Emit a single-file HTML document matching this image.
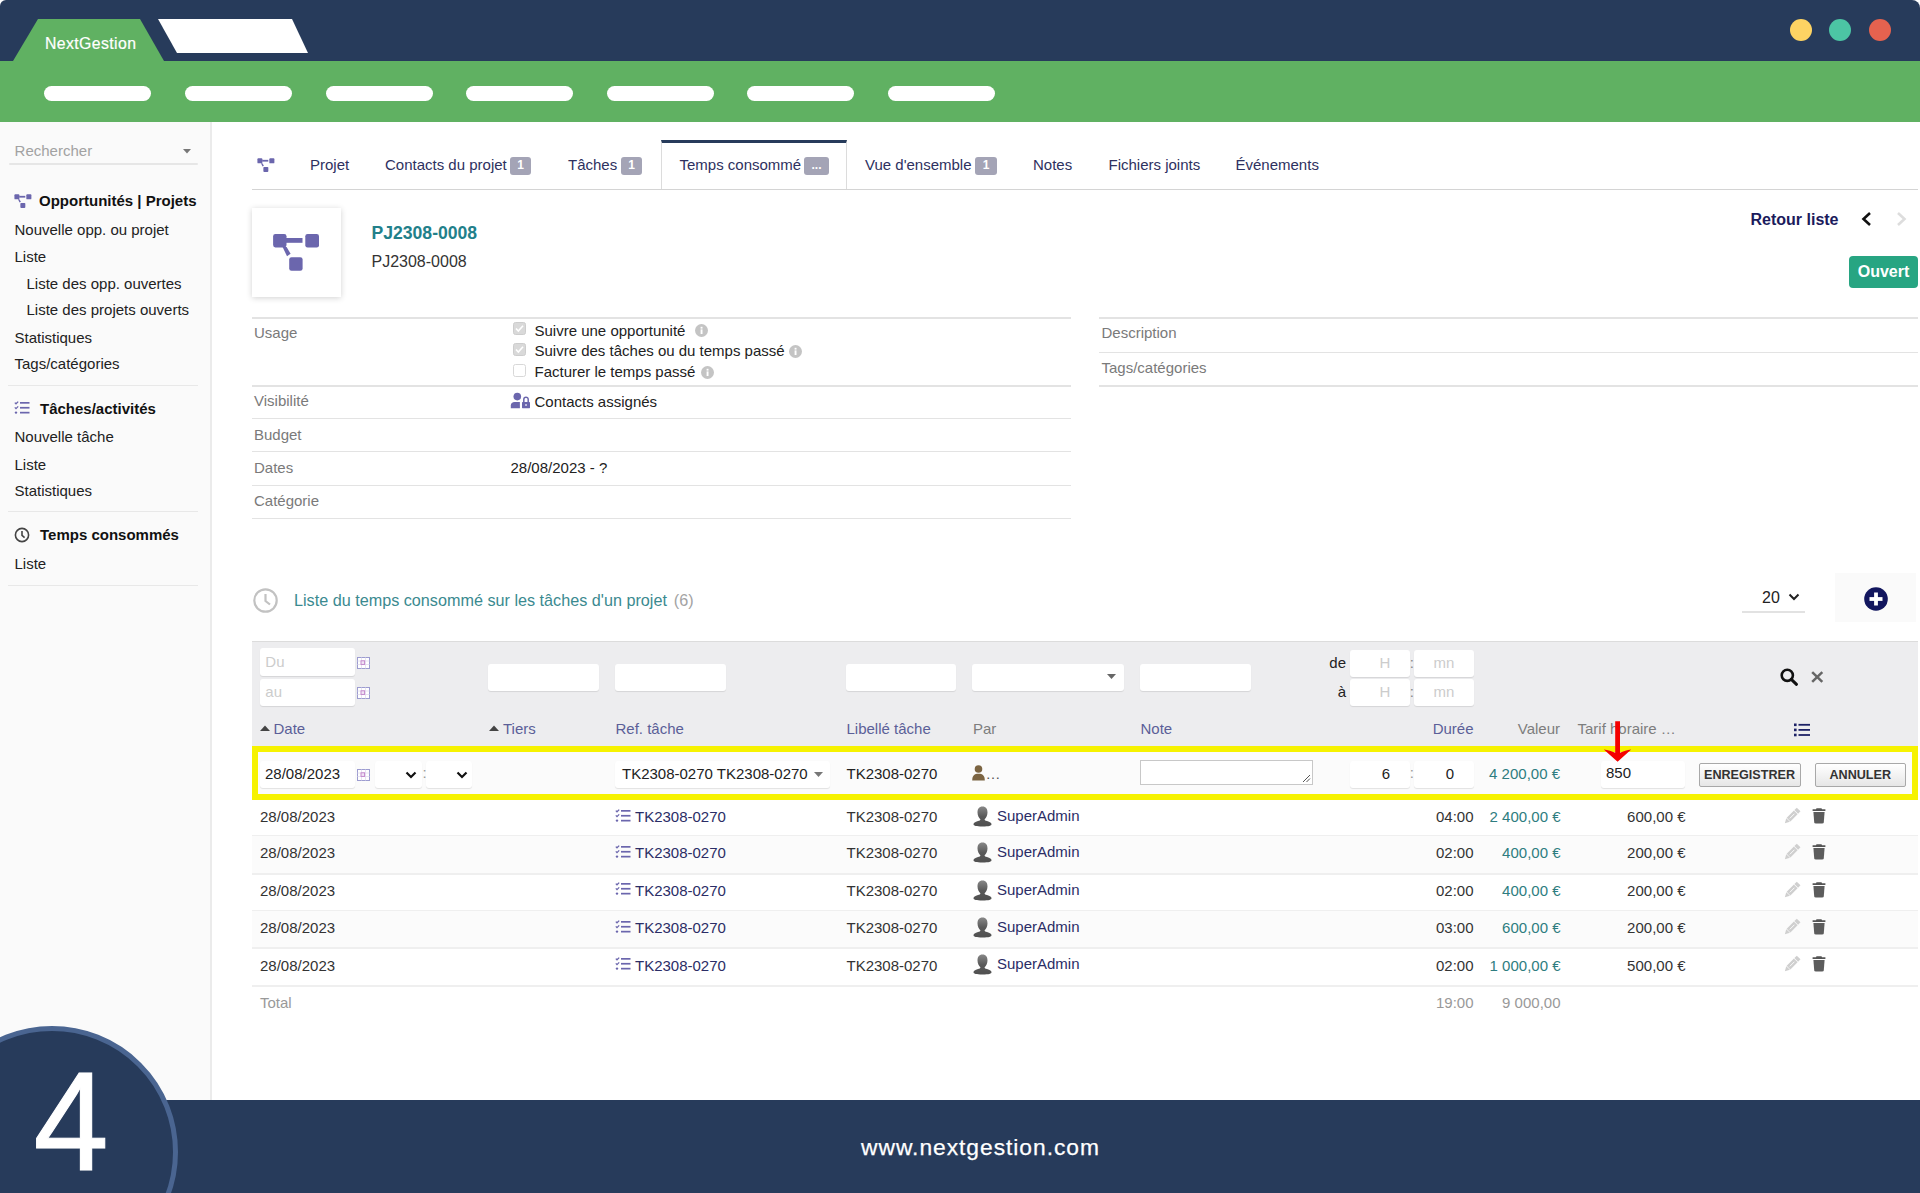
<!DOCTYPE html>
<html><head><meta charset="utf-8"><style>
html,body{margin:0;padding:0;width:1920px;height:1193px;overflow:hidden;background:#fff;font-family:"Liberation Sans",sans-serif;}
.a{position:absolute;}
.t{position:absolute;white-space:nowrap;}
svg.a{overflow:visible;}
.badge{background:#a4a4b6;border-radius:3px;color:#fff;font-size:12px;font-weight:700;line-height:17px;text-align:center;}
.inp{background:#fff;border-radius:3px;box-shadow:0 1px 1px rgba(0,0,0,0.10);box-sizing:border-box;white-space:nowrap;overflow:hidden;}
.btn{box-sizing:border-box;border:1px solid #a8a8a8;border-radius:2px;background:linear-gradient(#ffffff,#e6e6e6);color:#333;font-weight:700;font-size:12.6px;line-height:22.5px;text-align:center;}
</style></head><body>
<div class="a" style="left:0px;top:0px;width:1920px;height:62px;background:#273b5b;border-radius:6px 8px 0 0;"></div>
<svg class="a" style="left:0px;top:0px" width="320" height="62" viewBox="0 0 320 62"><polygon points="13,61 38,19 140,19 164,61" fill="#60b162"/><polygon points="158,19 292,19 308,53 177,53" fill="#fff"/></svg>
<div class="t " style="left:45px;top:36.33px;font-size:15.8px;line-height:15.8px;color:#fff;letter-spacing:0.4px;-webkit-text-stroke:0.2px #fff;">NextGestion</div>
<div class="a" style="left:0px;top:61px;width:1920px;height:61px;background:#60b162;"></div>
<div class="a" style="left:44px;top:86px;width:107px;height:15px;background:#fff;border-radius:8px;"></div>
<div class="a" style="left:185px;top:86px;width:107px;height:15px;background:#fff;border-radius:8px;"></div>
<div class="a" style="left:326px;top:86px;width:107px;height:15px;background:#fff;border-radius:8px;"></div>
<div class="a" style="left:466px;top:86px;width:107px;height:15px;background:#fff;border-radius:8px;"></div>
<div class="a" style="left:607px;top:86px;width:107px;height:15px;background:#fff;border-radius:8px;"></div>
<div class="a" style="left:747px;top:86px;width:107px;height:15px;background:#fff;border-radius:8px;"></div>
<div class="a" style="left:888px;top:86px;width:107px;height:15px;background:#fff;border-radius:8px;"></div>
<div class="a" style="left:1790px;top:19px;width:22px;height:22px;background:#fdd363;border-radius:50%;"></div>
<div class="a" style="left:1829px;top:19px;width:22px;height:22px;background:#4cc5a4;border-radius:50%;"></div>
<div class="a" style="left:1869px;top:19px;width:22px;height:22px;background:#e5624f;border-radius:50%;"></div>
<div class="a" style="left:0px;top:122px;width:210px;height:978px;background:#fafafa;"></div>
<div class="a" style="left:210px;top:122px;width:2px;height:978px;background:#ebebeb;"></div>
<div class="t " style="left:14.6px;top:142.80px;font-size:15px;line-height:15px;color:#a2a2a2;">Rechercher</div>
<div class="a" style="left:9px;top:163px;width:189px;height:2px;background:#e6e6e6;border-radius:1px;"></div>
<svg class="a" style="left:183px;top:149.2px" width="8" height="5" viewBox="0 0 8 5"><polygon points="0,0 8,0 4,4.6" fill="#777"/></svg>
<svg class="a" style="left:13.6px;top:193.6px" width="19" height="15" viewBox="0 0 19 15"><g fill="#6b66ad" transform="scale(0.37)"><rect x="1.1" y="1" width="13.4" height="13.4" rx="2.3"/><rect x="33.3" y="1" width="13.7" height="13.5" rx="2.3"/><rect x="17.2" y="24.2" width="13.4" height="13.5" rx="2.3"/><rect x="14" y="5" width="16.5" height="4.8"/><polygon points="10.6,14 14.6,14 18.6,20.8 15,23.2"/></g></svg>
<div class="t " style="left:39px;top:193.30px;font-size:15px;line-height:15px;color:#111;font-weight:700;">Opportunités | Projets</div>
<div class="t " style="left:14.5px;top:221.70px;font-size:15px;line-height:15px;color:#222;">Nouvelle opp. ou projet</div>
<div class="t " style="left:14.5px;top:248.80px;font-size:15px;line-height:15px;color:#222;">Liste</div>
<div class="t " style="left:26.5px;top:276.00px;font-size:15px;line-height:15px;color:#222;">Liste des opp. ouvertes</div>
<div class="t " style="left:26.5px;top:302.30px;font-size:15px;line-height:15px;color:#222;">Liste des projets ouverts</div>
<div class="t " style="left:14.5px;top:329.50px;font-size:15px;line-height:15px;color:#222;">Statistiques</div>
<div class="t " style="left:14.5px;top:356.30px;font-size:15px;line-height:15px;color:#222;">Tags/catégories</div>
<div class="a" style="left:8px;top:385px;width:190px;height:1px;background:#e8e8e8;"></div>
<svg class="a" style="left:14px;top:401px" width="16" height="13" viewBox="0 0 16 13"><g fill="none" stroke="#6b66ad" stroke-width="1.3"><polyline points="0.8,1.6 2,2.8 4.2,0.6"/><polyline points="0.8,6.4 2,7.6 4.2,5.4"/></g><circle cx="2" cy="11.6" r="1.2" fill="#6b66ad"/><g fill="#6b66ad"><rect x="6" y="1" width="9.5" height="1.7"/><rect x="6" y="5.9" width="9.5" height="1.7"/><rect x="6" y="10.8" width="9.5" height="1.7"/></g></svg>
<div class="t " style="left:40px;top:400.60px;font-size:15px;line-height:15px;color:#111;font-weight:700;">Tâches/activités</div>
<div class="t " style="left:14.5px;top:429.10px;font-size:15px;line-height:15px;color:#222;">Nouvelle tâche</div>
<div class="t " style="left:14.5px;top:456.50px;font-size:15px;line-height:15px;color:#222;">Liste</div>
<div class="t " style="left:14.5px;top:483.30px;font-size:15px;line-height:15px;color:#222;">Statistiques</div>
<div class="a" style="left:8px;top:511px;width:190px;height:1px;background:#e8e8e8;"></div>
<svg class="a" style="left:14px;top:527px" width="16" height="16" viewBox="0 0 16 16"><circle cx="8" cy="8" r="6.6" fill="none" stroke="#444" stroke-width="1.6"/><polyline points="8,4 8,8.3 10.6,10.6" fill="none" stroke="#444" stroke-width="1.6"/></svg>
<div class="t " style="left:40px;top:527.00px;font-size:15px;line-height:15px;color:#111;font-weight:700;">Temps consommés</div>
<div class="t " style="left:14.5px;top:556.30px;font-size:15px;line-height:15px;color:#222;">Liste</div>
<div class="a" style="left:8px;top:585px;width:190px;height:1px;background:#e8e8e8;"></div>
<svg class="a" style="left:257.3px;top:157.6px" width="19" height="15" viewBox="0 0 19 15"><g fill="#6b66ad" transform="scale(0.37)"><rect x="1.1" y="1" width="13.4" height="13.4" rx="2.3"/><rect x="33.3" y="1" width="13.7" height="13.5" rx="2.3"/><rect x="17.2" y="24.2" width="13.4" height="13.5" rx="2.3"/><rect x="14" y="5" width="16.5" height="4.8"/><polygon points="10.6,14 14.6,14 18.6,20.8 15,23.2"/></g></svg>
<div class="a" style="left:252px;top:189px;width:1666px;height:1px;background:#d4d4d4;"></div>
<div class="a" style="left:661px;top:140px;width:186px;height:49px;background:#fff;border:1px solid #dcdcdc;border-top:3px solid #273b5b;border-bottom:none;box-sizing:border-box;"></div>
<div class="t " style="left:310px;top:157.30px;font-size:15px;line-height:15px;color:#2e3160;">Projet</div>
<div class="t " style="left:385px;top:157.30px;font-size:15px;line-height:15px;color:#2e3160;">Contacts du projet</div>
<div class="a badge" style="left:510px;top:157.4px;width:21px;height:17.6px;">1</div>
<div class="t " style="left:568px;top:157.30px;font-size:15px;line-height:15px;color:#2e3160;">Tâches</div>
<div class="a badge" style="left:621px;top:157.4px;width:21px;height:17.6px;">1</div>
<div class="t " style="left:679.5px;top:157.30px;font-size:15px;line-height:15px;color:#2e3160;">Temps consommé</div>
<div class="a badge" style="left:804px;top:157.4px;width:25px;height:17.6px;">...</div>
<div class="t " style="left:865px;top:157.30px;font-size:15px;line-height:15px;color:#2e3160;">Vue d'ensemble</div>
<div class="a badge" style="left:975px;top:157.4px;width:22px;height:17.6px;">1</div>
<div class="t " style="left:1033px;top:157.30px;font-size:15px;line-height:15px;color:#2e3160;">Notes</div>
<div class="t " style="left:1108.5px;top:157.30px;font-size:15px;line-height:15px;color:#2e3160;">Fichiers joints</div>
<div class="t " style="left:1235.5px;top:157.30px;font-size:15px;line-height:15px;color:#2e3160;">Événements</div>
<div class="a" style="left:252px;top:208px;width:89px;height:89px;background:#fff;box-shadow:0 1px 6px rgba(0,0,0,0.18);"></div>
<svg class="a" style="left:272.3px;top:233px" width="49" height="39" viewBox="0 0 49 39"><g fill="#6b66ad" transform="scale(1.0)"><rect x="1.1" y="1" width="13.4" height="13.4" rx="2.3"/><rect x="33.3" y="1" width="13.7" height="13.5" rx="2.3"/><rect x="17.2" y="24.2" width="13.4" height="13.5" rx="2.3"/><rect x="14" y="5" width="16.5" height="4.8"/><polygon points="10.6,14 14.6,14 18.6,20.8 15,23.2"/></g></svg>
<div class="t " style="left:371.5px;top:225.30px;font-size:17.6px;line-height:17.6px;color:#22808a;font-weight:700;">PJ2308-0008</div>
<div class="t " style="left:371.5px;top:253.96px;font-size:16px;line-height:16px;color:#333;">PJ2308-0008</div>
<div class="t " style="right:81.5px;top:211.86px;font-size:16px;line-height:16px;color:#1b1b5c;font-weight:700;">Retour liste</div>
<svg class="a" style="left:1860px;top:211px" width="14" height="16" viewBox="0 0 14 16"><polyline points="10,2 3.5,8 10,14" fill="none" stroke="#111" stroke-width="2.6"/></svg>
<svg class="a" style="left:1894px;top:211px" width="14" height="16" viewBox="0 0 14 16"><polyline points="4,2 10.5,8 4,14" fill="none" stroke="#ddd" stroke-width="2.6"/></svg>
<div class="a" style="left:1849px;top:255.5px;width:69px;height:32px;background:#27a582;border-radius:4px;color:#fff;font-weight:700;font-size:16px;line-height:32px;text-align:center;">Ouvert</div>
<div class="a" style="left:252px;top:317px;width:819px;height:2px;background:#e3e3e3;"></div>
<div class="a" style="left:252px;top:384.5px;width:819px;height:2px;background:#e3e3e3;"></div>
<div class="a" style="left:252px;top:418px;width:819px;height:1px;background:#e3e3e3;"></div>
<div class="a" style="left:252px;top:451px;width:819px;height:1px;background:#e3e3e3;"></div>
<div class="a" style="left:252px;top:485px;width:819px;height:1px;background:#e3e3e3;"></div>
<div class="a" style="left:252px;top:517.5px;width:819px;height:1px;background:#e3e3e3;"></div>
<div class="a" style="left:1099px;top:317px;width:819px;height:2px;background:#e3e3e3;"></div>
<div class="a" style="left:1099px;top:351.5px;width:819px;height:1px;background:#e3e3e3;"></div>
<div class="a" style="left:1099px;top:384.5px;width:819px;height:2px;background:#e3e3e3;"></div>
<div class="t " style="left:254px;top:324.80px;font-size:15px;line-height:15px;color:#7a7a7a;">Usage</div>
<div class="t " style="left:254px;top:393.30px;font-size:15px;line-height:15px;color:#7a7a7a;">Visibilité</div>
<div class="t " style="left:254px;top:427.30px;font-size:15px;line-height:15px;color:#7a7a7a;">Budget</div>
<div class="t " style="left:254px;top:460.30px;font-size:15px;line-height:15px;color:#7a7a7a;">Dates</div>
<div class="t " style="left:254px;top:493.30px;font-size:15px;line-height:15px;color:#7a7a7a;">Catégorie</div>
<div class="t " style="left:1101.5px;top:324.80px;font-size:15px;line-height:15px;color:#7a7a7a;">Description</div>
<div class="t " style="left:1101.5px;top:359.90px;font-size:15px;line-height:15px;color:#7a7a7a;">Tags/catégories</div>
<svg class="a" style="left:513px;top:322px" width="13" height="13" viewBox="0 0 13 13"><rect x="0.5" y="0.5" width="12" height="12" rx="2" fill="#d9d9d9" stroke="#cdcdcd"/><polyline points="3,6.5 5.3,9 10,3.8" fill="none" stroke="#fff" stroke-width="1.6"/></svg>
<div class="t " style="left:534.5px;top:322.60px;font-size:15px;line-height:15px;color:#222;">Suivre une opportunité</div>
<svg class="a" style="left:694.5px;top:323.8px" width="13" height="13" viewBox="0 0 13 13"><circle cx="6.5" cy="6.5" r="6.5" fill="#c4c4c4"/><rect x="5.6" y="5.4" width="1.9" height="4.6" fill="#fff"/><rect x="5.6" y="2.8" width="1.9" height="1.8" fill="#fff"/></svg>
<svg class="a" style="left:513px;top:343px" width="13" height="13" viewBox="0 0 13 13"><rect x="0.5" y="0.5" width="12" height="12" rx="2" fill="#d9d9d9" stroke="#cdcdcd"/><polyline points="3,6.5 5.3,9 10,3.8" fill="none" stroke="#fff" stroke-width="1.6"/></svg>
<div class="t " style="left:534.5px;top:343.10px;font-size:15px;line-height:15px;color:#222;">Suivre des tâches ou du temps passé</div>
<svg class="a" style="left:789.0px;top:344.5px" width="13" height="13" viewBox="0 0 13 13"><circle cx="6.5" cy="6.5" r="6.5" fill="#c4c4c4"/><rect x="5.6" y="5.4" width="1.9" height="4.6" fill="#fff"/><rect x="5.6" y="2.8" width="1.9" height="1.8" fill="#fff"/></svg>
<svg class="a" style="left:513px;top:364px" width="13" height="13" viewBox="0 0 13 13"><rect x="0.5" y="0.5" width="12" height="12" rx="2" fill="#fff" stroke="#d8d8d8"/></svg>
<div class="t " style="left:534.5px;top:364.00px;font-size:15px;line-height:15px;color:#222;">Facturer le temps passé</div>
<svg class="a" style="left:700.5px;top:365.5px" width="13" height="13" viewBox="0 0 13 13"><circle cx="6.5" cy="6.5" r="6.5" fill="#c4c4c4"/><rect x="5.6" y="5.4" width="1.9" height="4.6" fill="#fff"/><rect x="5.6" y="2.8" width="1.9" height="1.8" fill="#fff"/></svg>
<svg class="a" style="left:510px;top:392px" width="21" height="17" viewBox="0 0 21 17"><g fill="#6b66ad"><circle cx="7.3" cy="4.6" r="3.8"/><path d="M0.8,16.2 L0.8,13.6 C0.8,11.4 2.3,10 4.6,10 L9.9,10 L9.9,16.2 Z"/><rect x="12" y="10.1" width="8" height="6.1" rx="0.6"/><path d="M13.8,10.3 L13.8,7.4 A2.2,2.2 0 0 1 18.2,7.4 L18.2,10.3" fill="none" stroke="#6b66ad" stroke-width="1.5"/><rect x="15.3" y="12.2" width="1.4" height="1.6" fill="#fff"/></g></svg>
<div class="t " style="left:534.5px;top:393.90px;font-size:15px;line-height:15px;color:#222;">Contacts assignés</div>
<div class="t " style="left:510.5px;top:460.30px;font-size:15px;line-height:15px;color:#222;">28/08/2023 - ?</div>
<svg class="a" style="left:253px;top:588px" width="25" height="25" viewBox="0 0 25 25"><circle cx="12.5" cy="12.5" r="11.2" fill="none" stroke="#c2c2c2" stroke-width="2.2"/><polyline points="12.5,6 12.5,13 17,16.5" fill="none" stroke="#c2c2c2" stroke-width="2.2"/></svg>
<div class="t " style="left:294px;top:591.79px;font-size:16.2px;line-height:16.2px;color:#3b8a90;">Liste du temps consommé sur les tâches d'un projet</div>
<div class="t " style="left:673.8px;top:591.79px;font-size:16.2px;line-height:16.2px;color:#a3a3a3;">(6)</div>
<div class="t " style="left:1762px;top:589.76px;font-size:16px;line-height:16px;color:#222;">20</div>
<svg class="a" style="left:1788px;top:593px" width="12" height="8" viewBox="0 0 12 8"><polyline points="1.5,1.5 6,6 10.5,1.5" fill="none" stroke="#222" stroke-width="2"/></svg>
<div class="a" style="left:1742px;top:611px;width:63px;height:1.6px;background:#e2e2e2;"></div>
<div class="a" style="left:1835px;top:573px;width:81px;height:49px;background:#fafafa;"></div>
<svg class="a" style="left:1864px;top:587px" width="24" height="24" viewBox="0 0 24 24"><circle cx="12" cy="12" r="11.8" fill="#12165e"/><rect x="10.1" y="5.5" width="3.8" height="13" fill="#fff"/><rect x="5.5" y="10.1" width="13" height="3.8" fill="#fff"/></svg>
<div class="a" style="left:252px;top:641px;width:1666px;height:105px;background:#ededef;border-top:1px solid #dcdcdc;box-sizing:border-box;"></div>
<div class="a inp" style="left:260px;top:648px;width:95px;height:28px;line-height:28px;color:#ccc;text-align:left;padding:0 5.3px;font-size:15px">Du</div>
<div class="a inp" style="left:260px;top:679px;width:95px;height:27px;line-height:25px;color:#ccc;text-align:left;padding:0 5.3px;font-size:15px">au</div>
<svg class="a" style="left:357px;top:657px" width="13" height="12" viewBox="0 0 13 12"><rect x="0.5" y="0.5" width="12" height="11" fill="#fff" stroke="#9c9cd0"/><g stroke="#e2dcef" stroke-width="0.8"><line x1="0.5" y1="4" x2="12.5" y2="4"/><line x1="0.5" y1="7.5" x2="12.5" y2="7.5"/><line x1="4.5" y1="0.5" x2="4.5" y2="11.5"/><line x1="8.5" y1="0.5" x2="8.5" y2="11.5"/></g><rect x="4" y="3.8" width="3.6" height="3.6" fill="#f0e4f4" stroke="#c080c8" stroke-width="0.9"/></svg>
<svg class="a" style="left:357px;top:687px" width="13" height="12" viewBox="0 0 13 12"><rect x="0.5" y="0.5" width="12" height="11" fill="#fff" stroke="#9c9cd0"/><g stroke="#e2dcef" stroke-width="0.8"><line x1="0.5" y1="4" x2="12.5" y2="4"/><line x1="0.5" y1="7.5" x2="12.5" y2="7.5"/><line x1="4.5" y1="0.5" x2="4.5" y2="11.5"/><line x1="8.5" y1="0.5" x2="8.5" y2="11.5"/></g><rect x="4" y="3.8" width="3.6" height="3.6" fill="#f0e4f4" stroke="#c080c8" stroke-width="0.9"/></svg>
<div class="a inp" style="left:488px;top:663.5px;width:111px;height:27px;line-height:25px;color:#ccc;text-align:left;padding:0 6px;font-size:15px"></div>
<div class="a inp" style="left:615px;top:663.5px;width:111px;height:27px;line-height:25px;color:#ccc;text-align:left;padding:0 6px;font-size:15px"></div>
<div class="a inp" style="left:846px;top:663.5px;width:110px;height:27px;line-height:25px;color:#ccc;text-align:left;padding:0 6px;font-size:15px"></div>
<div class="a inp" style="left:972px;top:663.5px;width:152px;height:27px;line-height:25px;color:#ccc;text-align:left;padding:0 6px;font-size:15px"></div>
<svg class="a" style="left:1107px;top:674px" width="9" height="6" viewBox="0 0 9 6"><polygon points="0,0 9,0 4.5,5" fill="#666"/></svg>
<div class="a inp" style="left:1140px;top:663.5px;width:111px;height:27px;line-height:25px;color:#ccc;text-align:left;padding:0 6px;font-size:15px"></div>
<div class="t " style="right:574px;top:655.30px;font-size:15px;line-height:15px;color:#222;">de</div>
<div class="t " style="right:574px;top:684.30px;font-size:15px;line-height:15px;color:#222;">à</div>
<div class="a inp" style="left:1350px;top:649.5px;width:60px;height:27px;line-height:25px;color:#ccc;text-align:right;padding:0 19.6px;font-size:15px">H</div>
<div class="a inp" style="left:1414px;top:649.5px;width:60px;height:27px;line-height:25px;color:#ccc;text-align:right;padding:0 19.6px;font-size:15px">mn</div>
<div class="a inp" style="left:1350px;top:678.5px;width:60px;height:27px;line-height:25px;color:#ccc;text-align:right;padding:0 19.6px;font-size:15px">H</div>
<div class="a inp" style="left:1414px;top:678.5px;width:60px;height:27px;line-height:25px;color:#ccc;text-align:right;padding:0 19.6px;font-size:15px">mn</div>
<div class="t " style="left:1409.8px;top:655.30px;font-size:15px;line-height:15px;color:#888;">:</div>
<div class="t " style="left:1409.8px;top:684.30px;font-size:15px;line-height:15px;color:#888;">:</div>
<svg class="a" style="left:1780px;top:668px" width="19" height="18" viewBox="0 0 19 18"><circle cx="7.3" cy="7.3" r="5.6" fill="none" stroke="#111" stroke-width="2.6"/><line x1="11.3" y1="11.3" x2="16.5" y2="16.3" stroke="#111" stroke-width="3" stroke-linecap="round"/></svg>
<svg class="a" style="left:1810.5px;top:671px" width="12.5" height="12" viewBox="0 0 12.5 12"><g stroke="#666" stroke-width="2.5"><line x1="1.2" y1="1.2" x2="11.3" y2="10.8"/><line x1="11.3" y1="1.2" x2="1.2" y2="10.8"/></g></svg>
<svg class="a" style="left:260px;top:725px" width="10" height="6" viewBox="0 0 10 6"><polygon points="0,6 10,6 5,0.5" fill="#444"/></svg>
<div class="t " style="left:273.5px;top:720.60px;font-size:15px;line-height:15px;color:#5b5f98;">Date</div>
<svg class="a" style="left:488.5px;top:725px" width="10" height="6" viewBox="0 0 10 6"><polygon points="0,6 10,6 5,0.5" fill="#444"/></svg>
<div class="t " style="left:503px;top:720.60px;font-size:15px;line-height:15px;color:#5b5f98;">Tiers</div>
<div class="t " style="left:615.5px;top:720.60px;font-size:15px;line-height:15px;color:#5b5f98;">Ref. tâche</div>
<div class="t " style="left:846.5px;top:720.60px;font-size:15px;line-height:15px;color:#5b5f98;">Libellé tâche</div>
<div class="t " style="left:973px;top:720.60px;font-size:15px;line-height:15px;color:#7d7d7d;">Par</div>
<div class="t " style="left:1140.5px;top:720.60px;font-size:15px;line-height:15px;color:#5b5f98;">Note</div>
<div class="t " style="right:446.5px;top:720.60px;font-size:15px;line-height:15px;color:#5b5f98;">Durée</div>
<div class="t " style="right:360px;top:720.60px;font-size:15px;line-height:15px;color:#7d7d7d;">Valeur</div>
<div class="t " style="left:1577.5px;top:720.60px;font-size:15px;line-height:15px;color:#7d7d7d;">Tarif horaire …</div>
<svg class="a" style="left:1794px;top:723px" width="17" height="14" viewBox="0 0 17 14"><g fill="#1d2266"><rect x="0" y="0.5" width="2.6" height="2.6"/><rect x="0" y="5.6" width="2.6" height="2.6"/><rect x="0" y="10.7" width="2.6" height="2.6"/><rect x="4.5" y="0.9" width="11.5" height="1.8"/><rect x="4.5" y="6" width="11.5" height="1.8"/><rect x="4.5" y="11.1" width="11.5" height="1.8"/></g></svg>
<div class="a" style="left:252px;top:746.2px;width:1666px;height:53.6px;background:#fbfbfb;border:6px solid #f6f200;box-sizing:border-box;"></div>
<div class="a inp" style="left:260px;top:761px;width:95px;height:27px;line-height:25px;color:#222;text-align:left;padding:0 5px;font-size:15px">28/08/2023</div>
<svg class="a" style="left:357px;top:769px" width="13" height="12" viewBox="0 0 13 12"><rect x="0.5" y="0.5" width="12" height="11" fill="#fff" stroke="#9c9cd0"/><g stroke="#e2dcef" stroke-width="0.8"><line x1="0.5" y1="4" x2="12.5" y2="4"/><line x1="0.5" y1="7.5" x2="12.5" y2="7.5"/><line x1="4.5" y1="0.5" x2="4.5" y2="11.5"/><line x1="8.5" y1="0.5" x2="8.5" y2="11.5"/></g><rect x="4" y="3.8" width="3.6" height="3.6" fill="#f0e4f4" stroke="#c080c8" stroke-width="0.9"/></svg>
<div class="a inp" style="left:375px;top:761px;width:47px;height:27px;line-height:25px;color:#ccc;text-align:left;padding:0 6px;font-size:15px"></div>
<svg class="a" style="left:405px;top:771px" width="12" height="8" viewBox="0 0 12 8"><polyline points="1.5,1.5 6,6 10.5,1.5" fill="none" stroke="#111" stroke-width="2.2"/></svg>
<div class="t " style="left:422.5px;top:765.30px;font-size:15px;line-height:15px;color:#999;">:</div>
<div class="a inp" style="left:426px;top:761px;width:46px;height:27px;line-height:25px;color:#ccc;text-align:left;padding:0 6px;font-size:15px"></div>
<svg class="a" style="left:456px;top:771px" width="12" height="8" viewBox="0 0 12 8"><polyline points="1.5,1.5 6,6 10.5,1.5" fill="none" stroke="#111" stroke-width="2.2"/></svg>
<div class="a inp" style="left:615px;top:761px;width:215px;height:27px;line-height:25px;color:#222;text-align:left;padding:0 7px;font-size:15px">TK2308-0270 TK2308-0270</div>
<svg class="a" style="left:814px;top:772px" width="9" height="6" viewBox="0 0 9 6"><polygon points="0,0 9,0 4.5,5" fill="#777"/></svg>
<div class="t " style="left:846.5px;top:765.80px;font-size:15px;line-height:15px;color:#222;">TK2308-0270</div>
<svg class="a" style="left:972px;top:765px" width="14" height="16" viewBox="0 0 14 16"><circle cx="6.5" cy="4" r="3.8" fill="#7b6442"/><path d="M0.2,15.5 C0.2,10.5 2.5,8.8 6.5,8.8 C10.5,8.8 12.8,10.5 12.8,15.5 Z" fill="#7b6442"/></svg>
<div class="t " style="left:985.5px;top:765.80px;font-size:15px;line-height:15px;color:#555;">…</div>
<div class="a" style="left:1140px;top:760px;width:173px;height:25px;background:#fff;border:1px solid #c8c8c8;box-sizing:border-box;"></div>
<svg class="a" style="left:1302px;top:774px" width="9" height="9" viewBox="0 0 9 9"><g stroke="#555" stroke-width="1"><line x1="1" y1="8" x2="8" y2="1"/><line x1="4.5" y1="8" x2="8" y2="4.5"/></g></svg>
<div class="a inp" style="left:1350px;top:761px;width:60px;height:27px;line-height:25px;color:#222;text-align:right;padding:0 20px;font-size:15px">6</div>
<div class="t " style="left:1409.8px;top:765.30px;font-size:15px;line-height:15px;color:#999;">:</div>
<div class="a inp" style="left:1414px;top:761px;width:60px;height:27px;line-height:25px;color:#222;text-align:right;padding:0 20px;font-size:15px">0</div>
<div class="t " style="right:360px;top:766.30px;font-size:15px;line-height:15px;color:#2e7d80;">4 200,00 €</div>
<div class="a inp" style="left:1601px;top:761px;width:84px;height:27px;line-height:24px;color:#222;text-align:left;padding:0 5px;font-size:15px">850</div>
<div class="a btn" style="left:1698.5px;top:762.5px;width:102px;height:24.5px;">ENREGISTRER</div>
<div class="a btn" style="left:1815px;top:762.5px;width:90.5px;height:24.5px;">ANNULER</div>
<svg class="a" style="left:1603px;top:720px" width="30" height="43" viewBox="0 0 30 43"><path d="M0.8,29.4 C5,30 9,31 12.2,32.8 L12.2,1.3 L17,1.3 L17,32.8 C20.2,31 24.2,30 28.2,29.4 L14.6,41.8 Z" fill="#f40000"/></svg>
<div class="a" style="left:252px;top:835px;width:1666px;height:2px;background:#efefef;"></div>
<div class="t " style="left:260px;top:809.30px;font-size:15px;line-height:15px;color:#333;">28/08/2023</div>
<svg class="a" style="left:615px;top:808.7px" width="16" height="13" viewBox="0 0 16 13"><g fill="none" stroke="#6b66ad" stroke-width="1.3"><polyline points="0.8,1.6 2,2.8 4.2,0.6"/><polyline points="0.8,6.4 2,7.6 4.2,5.4"/></g><circle cx="2" cy="11.6" r="1.2" fill="#6b66ad"/><g fill="#6b66ad"><rect x="6" y="1" width="9.5" height="1.7"/><rect x="6" y="5.9" width="9.5" height="1.7"/><rect x="6" y="10.8" width="9.5" height="1.7"/></g></svg>
<div class="t " style="left:635px;top:809.30px;font-size:15px;line-height:15px;color:#2b2d66;">TK2308-0270</div>
<div class="t " style="left:846.5px;top:809.30px;font-size:15px;line-height:15px;color:#333;">TK2308-0270</div>
<svg class="a" style="left:973px;top:806px" width="19" height="21" viewBox="0 0 19 21"><defs><linearGradient id="pg0" x1="0" y1="0" x2="0" y2="1"><stop offset="0" stop-color="#888"/><stop offset="0.5" stop-color="#5a5a5a"/><stop offset="1" stop-color="#505050"/></linearGradient></defs><path d="M9.5,0.5 C13,0.5 14.5,3 14.5,6.5 C14.5,10 12.8,12 11.6,13.2 C11.6,14.2 12.5,14.6 14,15.1 C17,16 18.5,17 18.5,18.3 C18.5,19.8 16,20.5 9.5,20.5 C3,20.5 0.5,19.8 0.5,18.3 C0.5,17 2,16 5,15.1 C6.5,14.6 7.4,14.2 7.4,13.2 C6.2,12 4.5,10 4.5,6.5 C4.5,3 6,0.5 9.5,0.5 Z" fill="url(#pg0)"/></svg>
<div class="t " style="left:997px;top:808.10px;font-size:15px;line-height:15px;color:#2b2d66;">SuperAdmin</div>
<div class="t " style="right:446.5px;top:809.30px;font-size:15px;line-height:15px;color:#333;">04:00</div>
<div class="t " style="right:359.5px;top:809.30px;font-size:15px;line-height:15px;color:#2e7d80;">2 400,00 €</div>
<div class="t " style="right:234.5px;top:809.30px;font-size:15px;line-height:15px;color:#333;">600,00 €</div>
<svg class="a" style="left:1782.5px;top:808px" width="17" height="17" viewBox="0 0 17 17"><g transform="rotate(45 8.5 8.5)"><rect x="6" y="-1.5" width="5.2" height="3.4" fill="#cfcfcf"/><rect x="6" y="2.6" width="5.2" height="10.2" fill="#cfcfcf"/><polygon points="6,13.4 11.2,13.4 8.6,18" fill="#cfcfcf"/><line x1="8.6" y1="4.5" x2="8.6" y2="11" stroke="#fff" stroke-width="0.8"/></g></svg>
<svg class="a" style="left:1811.5px;top:807px" width="14" height="17" viewBox="0 0 14 17"><path d="M4.5,1.2 L9.5,1.2 L10,2.3 L13.4,2.3 L13.4,4 L0.6,4 L0.6,2.3 L4,2.3 Z" fill="#555"/><path d="M1.4,5 L12.6,5 L11.8,15.2 C11.7,16 11.2,16.4 10.4,16.4 L3.6,16.4 C2.8,16.4 2.3,16 2.2,15.2 Z" fill="#5c5c5c"/></svg>
<div class="a" style="left:252px;top:836px;width:1666px;height:37.5px;background:#fbfbfb;"></div>
<div class="a" style="left:252px;top:872.5px;width:1666px;height:2px;background:#efefef;"></div>
<div class="t " style="left:260px;top:845.30px;font-size:15px;line-height:15px;color:#333;">28/08/2023</div>
<svg class="a" style="left:615px;top:844.7px" width="16" height="13" viewBox="0 0 16 13"><g fill="none" stroke="#6b66ad" stroke-width="1.3"><polyline points="0.8,1.6 2,2.8 4.2,0.6"/><polyline points="0.8,6.4 2,7.6 4.2,5.4"/></g><circle cx="2" cy="11.6" r="1.2" fill="#6b66ad"/><g fill="#6b66ad"><rect x="6" y="1" width="9.5" height="1.7"/><rect x="6" y="5.9" width="9.5" height="1.7"/><rect x="6" y="10.8" width="9.5" height="1.7"/></g></svg>
<div class="t " style="left:635px;top:845.30px;font-size:15px;line-height:15px;color:#2b2d66;">TK2308-0270</div>
<div class="t " style="left:846.5px;top:845.30px;font-size:15px;line-height:15px;color:#333;">TK2308-0270</div>
<svg class="a" style="left:973px;top:842px" width="19" height="21" viewBox="0 0 19 21"><defs><linearGradient id="pg1" x1="0" y1="0" x2="0" y2="1"><stop offset="0" stop-color="#888"/><stop offset="0.5" stop-color="#5a5a5a"/><stop offset="1" stop-color="#505050"/></linearGradient></defs><path d="M9.5,0.5 C13,0.5 14.5,3 14.5,6.5 C14.5,10 12.8,12 11.6,13.2 C11.6,14.2 12.5,14.6 14,15.1 C17,16 18.5,17 18.5,18.3 C18.5,19.8 16,20.5 9.5,20.5 C3,20.5 0.5,19.8 0.5,18.3 C0.5,17 2,16 5,15.1 C6.5,14.6 7.4,14.2 7.4,13.2 C6.2,12 4.5,10 4.5,6.5 C4.5,3 6,0.5 9.5,0.5 Z" fill="url(#pg1)"/></svg>
<div class="t " style="left:997px;top:844.10px;font-size:15px;line-height:15px;color:#2b2d66;">SuperAdmin</div>
<div class="t " style="right:446.5px;top:845.30px;font-size:15px;line-height:15px;color:#333;">02:00</div>
<div class="t " style="right:359.5px;top:845.30px;font-size:15px;line-height:15px;color:#2e7d80;">400,00 €</div>
<div class="t " style="right:234.5px;top:845.30px;font-size:15px;line-height:15px;color:#333;">200,00 €</div>
<svg class="a" style="left:1782.5px;top:844px" width="17" height="17" viewBox="0 0 17 17"><g transform="rotate(45 8.5 8.5)"><rect x="6" y="-1.5" width="5.2" height="3.4" fill="#cfcfcf"/><rect x="6" y="2.6" width="5.2" height="10.2" fill="#cfcfcf"/><polygon points="6,13.4 11.2,13.4 8.6,18" fill="#cfcfcf"/><line x1="8.6" y1="4.5" x2="8.6" y2="11" stroke="#fff" stroke-width="0.8"/></g></svg>
<svg class="a" style="left:1811.5px;top:843px" width="14" height="17" viewBox="0 0 14 17"><path d="M4.5,1.2 L9.5,1.2 L10,2.3 L13.4,2.3 L13.4,4 L0.6,4 L0.6,2.3 L4,2.3 Z" fill="#555"/><path d="M1.4,5 L12.6,5 L11.8,15.2 C11.7,16 11.2,16.4 10.4,16.4 L3.6,16.4 C2.8,16.4 2.3,16 2.2,15.2 Z" fill="#5c5c5c"/></svg>
<div class="a" style="left:252px;top:910px;width:1666px;height:2px;background:#efefef;"></div>
<div class="t " style="left:260px;top:882.80px;font-size:15px;line-height:15px;color:#333;">28/08/2023</div>
<svg class="a" style="left:615px;top:882.2px" width="16" height="13" viewBox="0 0 16 13"><g fill="none" stroke="#6b66ad" stroke-width="1.3"><polyline points="0.8,1.6 2,2.8 4.2,0.6"/><polyline points="0.8,6.4 2,7.6 4.2,5.4"/></g><circle cx="2" cy="11.6" r="1.2" fill="#6b66ad"/><g fill="#6b66ad"><rect x="6" y="1" width="9.5" height="1.7"/><rect x="6" y="5.9" width="9.5" height="1.7"/><rect x="6" y="10.8" width="9.5" height="1.7"/></g></svg>
<div class="t " style="left:635px;top:882.80px;font-size:15px;line-height:15px;color:#2b2d66;">TK2308-0270</div>
<div class="t " style="left:846.5px;top:882.80px;font-size:15px;line-height:15px;color:#333;">TK2308-0270</div>
<svg class="a" style="left:973px;top:879.5px" width="19" height="21" viewBox="0 0 19 21"><defs><linearGradient id="pg2" x1="0" y1="0" x2="0" y2="1"><stop offset="0" stop-color="#888"/><stop offset="0.5" stop-color="#5a5a5a"/><stop offset="1" stop-color="#505050"/></linearGradient></defs><path d="M9.5,0.5 C13,0.5 14.5,3 14.5,6.5 C14.5,10 12.8,12 11.6,13.2 C11.6,14.2 12.5,14.6 14,15.1 C17,16 18.5,17 18.5,18.3 C18.5,19.8 16,20.5 9.5,20.5 C3,20.5 0.5,19.8 0.5,18.3 C0.5,17 2,16 5,15.1 C6.5,14.6 7.4,14.2 7.4,13.2 C6.2,12 4.5,10 4.5,6.5 C4.5,3 6,0.5 9.5,0.5 Z" fill="url(#pg2)"/></svg>
<div class="t " style="left:997px;top:881.60px;font-size:15px;line-height:15px;color:#2b2d66;">SuperAdmin</div>
<div class="t " style="right:446.5px;top:882.80px;font-size:15px;line-height:15px;color:#333;">02:00</div>
<div class="t " style="right:359.5px;top:882.80px;font-size:15px;line-height:15px;color:#2e7d80;">400,00 €</div>
<div class="t " style="right:234.5px;top:882.80px;font-size:15px;line-height:15px;color:#333;">200,00 €</div>
<svg class="a" style="left:1782.5px;top:881.5px" width="17" height="17" viewBox="0 0 17 17"><g transform="rotate(45 8.5 8.5)"><rect x="6" y="-1.5" width="5.2" height="3.4" fill="#cfcfcf"/><rect x="6" y="2.6" width="5.2" height="10.2" fill="#cfcfcf"/><polygon points="6,13.4 11.2,13.4 8.6,18" fill="#cfcfcf"/><line x1="8.6" y1="4.5" x2="8.6" y2="11" stroke="#fff" stroke-width="0.8"/></g></svg>
<svg class="a" style="left:1811.5px;top:880.5px" width="14" height="17" viewBox="0 0 14 17"><path d="M4.5,1.2 L9.5,1.2 L10,2.3 L13.4,2.3 L13.4,4 L0.6,4 L0.6,2.3 L4,2.3 Z" fill="#555"/><path d="M1.4,5 L12.6,5 L11.8,15.2 C11.7,16 11.2,16.4 10.4,16.4 L3.6,16.4 C2.8,16.4 2.3,16 2.2,15.2 Z" fill="#5c5c5c"/></svg>
<div class="a" style="left:252px;top:911px;width:1666px;height:37.299999999999955px;background:#fbfbfb;"></div>
<div class="a" style="left:252px;top:947.3px;width:1666px;height:2px;background:#efefef;"></div>
<div class="t " style="left:260px;top:920.30px;font-size:15px;line-height:15px;color:#333;">28/08/2023</div>
<svg class="a" style="left:615px;top:919.7px" width="16" height="13" viewBox="0 0 16 13"><g fill="none" stroke="#6b66ad" stroke-width="1.3"><polyline points="0.8,1.6 2,2.8 4.2,0.6"/><polyline points="0.8,6.4 2,7.6 4.2,5.4"/></g><circle cx="2" cy="11.6" r="1.2" fill="#6b66ad"/><g fill="#6b66ad"><rect x="6" y="1" width="9.5" height="1.7"/><rect x="6" y="5.9" width="9.5" height="1.7"/><rect x="6" y="10.8" width="9.5" height="1.7"/></g></svg>
<div class="t " style="left:635px;top:920.30px;font-size:15px;line-height:15px;color:#2b2d66;">TK2308-0270</div>
<div class="t " style="left:846.5px;top:920.30px;font-size:15px;line-height:15px;color:#333;">TK2308-0270</div>
<svg class="a" style="left:973px;top:917px" width="19" height="21" viewBox="0 0 19 21"><defs><linearGradient id="pg3" x1="0" y1="0" x2="0" y2="1"><stop offset="0" stop-color="#888"/><stop offset="0.5" stop-color="#5a5a5a"/><stop offset="1" stop-color="#505050"/></linearGradient></defs><path d="M9.5,0.5 C13,0.5 14.5,3 14.5,6.5 C14.5,10 12.8,12 11.6,13.2 C11.6,14.2 12.5,14.6 14,15.1 C17,16 18.5,17 18.5,18.3 C18.5,19.8 16,20.5 9.5,20.5 C3,20.5 0.5,19.8 0.5,18.3 C0.5,17 2,16 5,15.1 C6.5,14.6 7.4,14.2 7.4,13.2 C6.2,12 4.5,10 4.5,6.5 C4.5,3 6,0.5 9.5,0.5 Z" fill="url(#pg3)"/></svg>
<div class="t " style="left:997px;top:919.10px;font-size:15px;line-height:15px;color:#2b2d66;">SuperAdmin</div>
<div class="t " style="right:446.5px;top:920.30px;font-size:15px;line-height:15px;color:#333;">03:00</div>
<div class="t " style="right:359.5px;top:920.30px;font-size:15px;line-height:15px;color:#2e7d80;">600,00 €</div>
<div class="t " style="right:234.5px;top:920.30px;font-size:15px;line-height:15px;color:#333;">200,00 €</div>
<svg class="a" style="left:1782.5px;top:919px" width="17" height="17" viewBox="0 0 17 17"><g transform="rotate(45 8.5 8.5)"><rect x="6" y="-1.5" width="5.2" height="3.4" fill="#cfcfcf"/><rect x="6" y="2.6" width="5.2" height="10.2" fill="#cfcfcf"/><polygon points="6,13.4 11.2,13.4 8.6,18" fill="#cfcfcf"/><line x1="8.6" y1="4.5" x2="8.6" y2="11" stroke="#fff" stroke-width="0.8"/></g></svg>
<svg class="a" style="left:1811.5px;top:918px" width="14" height="17" viewBox="0 0 14 17"><path d="M4.5,1.2 L9.5,1.2 L10,2.3 L13.4,2.3 L13.4,4 L0.6,4 L0.6,2.3 L4,2.3 Z" fill="#555"/><path d="M1.4,5 L12.6,5 L11.8,15.2 C11.7,16 11.2,16.4 10.4,16.4 L3.6,16.4 C2.8,16.4 2.3,16 2.2,15.2 Z" fill="#5c5c5c"/></svg>
<div class="a" style="left:252px;top:984.5px;width:1666px;height:2px;background:#efefef;"></div>
<div class="t " style="left:260px;top:957.60px;font-size:15px;line-height:15px;color:#333;">28/08/2023</div>
<svg class="a" style="left:615px;top:957.0px" width="16" height="13" viewBox="0 0 16 13"><g fill="none" stroke="#6b66ad" stroke-width="1.3"><polyline points="0.8,1.6 2,2.8 4.2,0.6"/><polyline points="0.8,6.4 2,7.6 4.2,5.4"/></g><circle cx="2" cy="11.6" r="1.2" fill="#6b66ad"/><g fill="#6b66ad"><rect x="6" y="1" width="9.5" height="1.7"/><rect x="6" y="5.9" width="9.5" height="1.7"/><rect x="6" y="10.8" width="9.5" height="1.7"/></g></svg>
<div class="t " style="left:635px;top:957.60px;font-size:15px;line-height:15px;color:#2b2d66;">TK2308-0270</div>
<div class="t " style="left:846.5px;top:957.60px;font-size:15px;line-height:15px;color:#333;">TK2308-0270</div>
<svg class="a" style="left:973px;top:954.3px" width="19" height="21" viewBox="0 0 19 21"><defs><linearGradient id="pg4" x1="0" y1="0" x2="0" y2="1"><stop offset="0" stop-color="#888"/><stop offset="0.5" stop-color="#5a5a5a"/><stop offset="1" stop-color="#505050"/></linearGradient></defs><path d="M9.5,0.5 C13,0.5 14.5,3 14.5,6.5 C14.5,10 12.8,12 11.6,13.2 C11.6,14.2 12.5,14.6 14,15.1 C17,16 18.5,17 18.5,18.3 C18.5,19.8 16,20.5 9.5,20.5 C3,20.5 0.5,19.8 0.5,18.3 C0.5,17 2,16 5,15.1 C6.5,14.6 7.4,14.2 7.4,13.2 C6.2,12 4.5,10 4.5,6.5 C4.5,3 6,0.5 9.5,0.5 Z" fill="url(#pg4)"/></svg>
<div class="t " style="left:997px;top:956.40px;font-size:15px;line-height:15px;color:#2b2d66;">SuperAdmin</div>
<div class="t " style="right:446.5px;top:957.60px;font-size:15px;line-height:15px;color:#333;">02:00</div>
<div class="t " style="right:359.5px;top:957.60px;font-size:15px;line-height:15px;color:#2e7d80;">1 000,00 €</div>
<div class="t " style="right:234.5px;top:957.60px;font-size:15px;line-height:15px;color:#333;">500,00 €</div>
<svg class="a" style="left:1782.5px;top:956.3px" width="17" height="17" viewBox="0 0 17 17"><g transform="rotate(45 8.5 8.5)"><rect x="6" y="-1.5" width="5.2" height="3.4" fill="#cfcfcf"/><rect x="6" y="2.6" width="5.2" height="10.2" fill="#cfcfcf"/><polygon points="6,13.4 11.2,13.4 8.6,18" fill="#cfcfcf"/><line x1="8.6" y1="4.5" x2="8.6" y2="11" stroke="#fff" stroke-width="0.8"/></g></svg>
<svg class="a" style="left:1811.5px;top:955.3px" width="14" height="17" viewBox="0 0 14 17"><path d="M4.5,1.2 L9.5,1.2 L10,2.3 L13.4,2.3 L13.4,4 L0.6,4 L0.6,2.3 L4,2.3 Z" fill="#555"/><path d="M1.4,5 L12.6,5 L11.8,15.2 C11.7,16 11.2,16.4 10.4,16.4 L3.6,16.4 C2.8,16.4 2.3,16 2.2,15.2 Z" fill="#5c5c5c"/></svg>
<div class="t " style="left:260px;top:995.30px;font-size:15px;line-height:15px;color:#999;">Total</div>
<div class="t " style="right:446.5px;top:995.30px;font-size:15px;line-height:15px;color:#999;">19:00</div>
<div class="t " style="right:359.5px;top:995.30px;font-size:15px;line-height:15px;color:#999;">9 000,00</div>
<div class="a" style="left:0px;top:1100px;width:1920px;height:93px;background:#273b5b;"></div>
<div class="t " style="left:680.5px;width:600px;text-align:center;top:1135.70px;font-size:22.8px;line-height:22.8px;color:#fff;letter-spacing:0.97px;-webkit-text-stroke:0.25px #fff;">www.nextgestion.com</div>
<div class="a" style="left:-74px;top:1026px;width:252px;height:252px;border-radius:50%;background:#273b5b;border:5px solid #4a6591;box-sizing:border-box;"></div>
<div class="t " style="left:-228.8px;width:600px;text-align:center;top:1050.52px;font-size:141.5px;line-height:141.5px;color:#fff;transform:scaleX(0.955);-webkit-text-stroke:1.1px #fff;">4</div>
</body></html>
